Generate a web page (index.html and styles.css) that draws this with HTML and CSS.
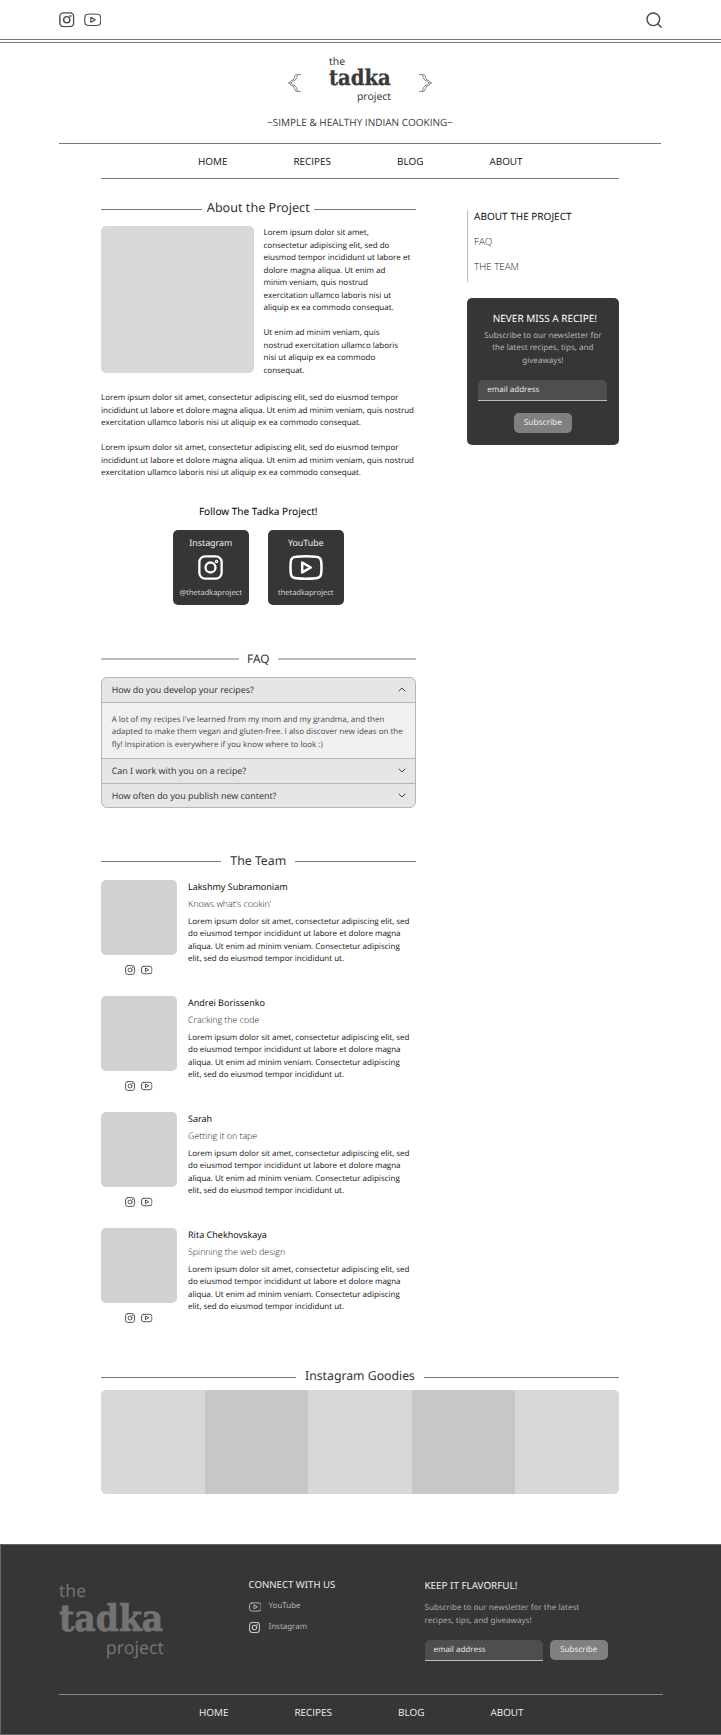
FILE: index.html
```html
<!DOCTYPE html>
<html lang="en">
<head>
<meta charset="utf-8">
<title>The Tadka Project</title>
<link rel="stylesheet" href="styles.css">
</head>
<body>
<svg class="defs" width="0" height="0">
  <symbol id="ig" viewBox="0 0 24 24">
    <rect x="1.3" y="1.3" width="21.4" height="21.4" rx="5.6"/>
    <circle cx="12" cy="12" r="4.8"/>
    <circle class="dot" cx="17.8" cy="6.2" r=".6"/>
  </symbol>
  <symbol id="yt" viewBox="0 0 34 25">
    <path d="M7 1.8Q17 .8 27 1.8Q31.8 2.1 32.2 6.6Q32.8 12.5 32.2 18.4Q31.8 22.9 27 23.2Q17 24.2 7 23.2Q2.2 22.9 1.8 18.4Q1.2 12.5 1.8 6.6Q2.2 2.1 7 1.8Z"/>
    <path d="M13.2 7.6V17.4L21.8 12.5Z"/>
  </symbol>
  <symbol id="orn" viewBox="0 0 13 18">
    <path d="M12.7 .6C10 .2 7 .8 6.7 2.5C7.1 3.6 5.8 4.1 5.6 5.1C5.6 6.5 3.7 6 3 6.6C2.7 7.8 1.8 8.5 .5 9C1.8 9.5 2.7 10.2 3 11.4C3.7 12 5.6 11.5 5.6 12.9C5.8 13.9 7.1 14.4 6.7 15.5C7 17.2 10 17.8 12.7 17.4"/>
    <path d="M10 .8C8.8 1.8 9.5 2 9 3.4C8.4 3.5 8.5 5 7.3 5.6C7.2 7 5.3 6.6 4.7 7.5C4.4 8.3 3.3 8.7 2.6 9C3.3 9.3 4.4 9.7 4.7 10.5C5.3 11.4 7.2 11 7.3 12.4C8.5 13 8.4 14.5 9 14.6C9.5 16 8.8 16.2 10 17.2"/>
  </symbol>
</svg>

<div class="top">
  <svg class="ic ig-top"><use href="#ig"/></svg>
  <svg class="ic yt-top"><use href="#yt"/></svg>
  <svg class="ic search" viewBox="0 0 16 16"><circle cx="7.3" cy="7.3" r="6.3"/><path d="M11.8 11.8L15.2 15.2"/></svg>
</div>
<div class="double"></div>

<header class="brand">
  <div class="brand-row">
    <svg class="orn"><use href="#orn"/></svg>
    <div class="logo"><span class="the">the</span><b>tadka</b><span class="project">project</span></div>
    <svg class="orn flip"><use href="#orn"/></svg>
  </div>
  <div class="tagline">~SIMPLE &amp; HEALTHY INDIAN COOKING~</div>
</header>
<nav class="nav"><a>HOME</a><a>RECIPES</a><a>BLOG</a><a>ABOUT</a></nav>

<main class="page">
  <div class="cols">
    <div class="content">
      <section class="about">
        <h2 class="title t-about"><span>About the Project</span></h2>
        <div class="intro">
          <div class="photo"></div>
          <div class="copy">
            <p>Lorem ipsum dolor sit amet,<br>consectetur adipiscing elit, sed do<br>eiusmod tempor incididunt ut labore et<br>dolore magna aliqua. Ut enim ad<br>minim veniam, quis nostrud<br>exercitation ullamco laboris nisi ut<br>aliquip ex ea commodo consequat.</p>
            <p>Ut enim ad minim veniam, quis<br>nostrud exercitation ullamco laboris<br>nisi ut aliquip ex ea commodo<br>consequat.</p>
          </div>
        </div>
        <div class="copy wide">
          <p>Lorem ipsum dolor sit amet, consectetur adipiscing elit, sed do eiusmod tempor<br>incididunt ut labore et dolore magna aliqua. Ut enim ad minim veniam, quis nostrud<br>exercitation ullamco laboris nisi ut aliquip ex ea commodo consequat.</p>
          <p>Lorem ipsum dolor sit amet, consectetur adipiscing elit, sed do eiusmod tempor<br>incididunt ut labore et dolore magna aliqua. Ut enim ad minim veniam, quis nostrud<br>exercitation ullamco laboris nisi ut aliquip ex ea commodo consequat.</p>
        </div>
        <h3 class="follow">Follow The Tadka Project!</h3>
        <div class="socials">
          <div class="social"><strong>Instagram</strong><svg class="ic ig-big"><use href="#ig"/></svg><span>@thetadkaproject</span></div>
          <div class="social"><strong>YouTube</strong><svg class="ic yt-big"><use href="#yt"/></svg><span>thetadkaproject</span></div>
        </div>
      </section>

      <section class="faq">
        <h2 class="title t-faq"><span>FAQ</span></h2>
        <div class="accordion">
          <div class="q">How do you develop your recipes?<svg class="chev up" viewBox="0 0 8 5"><path d="M.7 .7L4 4L7.3 .7"/></svg></div>
          <p class="answer">A lot of my recipes I've learned from my mom and my grandma, and then<br>adapted to make them vegan and gluten-free. I also discover new ideas on the<br>fly! Inspiration is everywhere if you know where to look :)</p>
          <div class="q">Can I work with you on a recipe?<svg class="chev" viewBox="0 0 8 5"><path d="M.7 .7L4 4L7.3 .7"/></svg></div>
          <div class="q">How often do you publish new content?<svg class="chev" viewBox="0 0 8 5"><path d="M.7 .7L4 4L7.3 .7"/></svg></div>
        </div>
      </section>

      <section class="team">
        <h2 class="title t-team"><span>The Team</span></h2>
        <article class="member">
          <div class="face"><div class="avatar"></div><div class="links"><svg class="ic ig-s"><use href="#ig"/></svg><svg class="ic yt-s"><use href="#yt"/></svg></div></div>
          <div class="bio"><h4>Lakshmy Subramoniam</h4><h5>Knows what’s cookin’</h5><p>Lorem ipsum dolor sit amet, consectetur adipiscing elit, sed<br>do eiusmod tempor incididunt ut labore et dolore magna<br>aliqua. Ut enim ad minim veniam. Consectetur adipiscing<br>elit, sed do eiusmod tempor incididunt ut.</p></div>
        </article>
        <article class="member">
          <div class="face"><div class="avatar"></div><div class="links"><svg class="ic ig-s"><use href="#ig"/></svg><svg class="ic yt-s"><use href="#yt"/></svg></div></div>
          <div class="bio"><h4>Andrei Borissenko</h4><h5>Cracking the code</h5><p>Lorem ipsum dolor sit amet, consectetur adipiscing elit, sed<br>do eiusmod tempor incididunt ut labore et dolore magna<br>aliqua. Ut enim ad minim veniam. Consectetur adipiscing<br>elit, sed do eiusmod tempor incididunt ut.</p></div>
        </article>
        <article class="member">
          <div class="face"><div class="avatar"></div><div class="links"><svg class="ic ig-s"><use href="#ig"/></svg><svg class="ic yt-s"><use href="#yt"/></svg></div></div>
          <div class="bio"><h4>Sarah</h4><h5>Getting it on tape</h5><p>Lorem ipsum dolor sit amet, consectetur adipiscing elit, sed<br>do eiusmod tempor incididunt ut labore et dolore magna<br>aliqua. Ut enim ad minim veniam. Consectetur adipiscing<br>elit, sed do eiusmod tempor incididunt ut.</p></div>
        </article>
        <article class="member">
          <div class="face"><div class="avatar"></div><div class="links"><svg class="ic ig-s"><use href="#ig"/></svg><svg class="ic yt-s"><use href="#yt"/></svg></div></div>
          <div class="bio"><h4>Rita Chekhovskaya</h4><h5>Spinning the web design</h5><p>Lorem ipsum dolor sit amet, consectetur adipiscing elit, sed<br>do eiusmod tempor incididunt ut labore et dolore magna<br>aliqua. Ut enim ad minim veniam. Consectetur adipiscing<br>elit, sed do eiusmod tempor incididunt ut.</p></div>
        </article>
      </section>
    </div>

    <aside class="side">
      <div class="toc"><a class="current">ABOUT THE PROJECT</a><a>FAQ</a><a>THE TEAM</a></div>
      <div class="news">
        <h3>NEVER MISS A RECIPE!</h3>
        <p>Subscribe to our newsletter for<br>the latest recipes, tips, and<br>giveaways!</p>
        <div class="input">email address</div>
        <div class="btn">Subscribe</div>
      </div>
    </aside>
  </div>

  <section class="goodies">
    <h2 class="title t-good"><span>Instagram Goodies</span></h2>
    <div class="strip"><i></i><i></i><i></i><i></i><i></i></div>
  </section>
</main>

<footer class="footer">
  <div class="foot-main">
    <div class="logo large"><span class="the">the</span><b>tadka</b><span class="project">project</span></div>
    <div class="connect">
      <h3>CONNECT WITH US</h3>
      <a><svg class="ic yt-f"><use href="#yt"/></svg>YouTube</a>
      <a><svg class="ic ig-f"><use href="#ig"/></svg>Instagram</a>
    </div>
    <div class="keep">
      <h3>KEEP IT FLAVORFUL!</h3>
      <p>Subscribe to our newsletter for the latest<br>recipes, tips, and giveaways!</p>
      <div class="form"><div class="input">email address</div><div class="btn">Subscribe</div></div>
    </div>
  </div>
  <nav class="foot-nav"><a>HOME</a><a>RECIPES</a><a>BLOG</a><a>ABOUT</a></nav>
</footer>
</body>
</html>
```
FILE: styles.css
```css
* { box-sizing: border-box; margin: 0; padding: 0; }
body { width: 721px; background: #fff; color: #111; font: 8px/12.5px "Open Sans", sans-serif; white-space: nowrap; text-rendering: geometricPrecision; }
.defs { display: block; position: absolute; }
h2, h3, h4, h5 { font-family: "Noto Sans", sans-serif; font-weight: 400; }
.ic { display: block; flex: none; fill: none; stroke: #4a4a4a; stroke-width: 2.2; stroke-linejoin: round; stroke-linecap: round; }
.ic .dot { fill: #4a4a4a; stroke: none; }

.top { height: 39px; padding: 12px 59px 0; display: flex; }
.ig-top { width: 15.5px; height: 15.5px; margin-right: 9px; }
.yt-top { width: 17.5px; height: 15.5px; }
.search { width: 16px; height: 16px; margin-left: auto; stroke-width: 1.4; }
.double { height: 4px; border: solid #777; border-width: 1px 0; }

.brand { height: 101px; margin: 0 60px 0 59px; padding-top: 14px; border-bottom: 1px solid #777; color: #3a3a3a; }
.brand-row { display: flex; justify-content: center; }
.orn { width: 13px; height: 18px; margin: 17px 28px 0; fill: none; stroke: #444; stroke-width: .7; }
.flip { transform: scaleX(-1); }
.logo { display: flex; flex-direction: column; width: 62px; }
.logo span { font: 10.4px/10px "Noto Sans", sans-serif; }
.logo b { font: 700 21.8px/23px "DejaVu Serif Condensed", "DejaVu Serif", serif; font-stretch: condensed; -webkit-text-stroke: .3px currentColor; }
.logo .project { align-self: flex-end; line-height: 15.6px; }
.tagline { margin-top: 9.9px; text-align: center; font-size: 10px; line-height: 14px; }

.nav, .foot-nav { display: flex; justify-content: center; gap: 66px; font-size: 9.92px; line-height: 35px; }
.nav { height: 35px; margin: 0 102px 0 101px; border-bottom: 1px solid #777; }
.nav a, .foot-nav a { position: relative; left: .3px; }

.page { padding: 0 102px 0 101px; }
.cols { display: flex; justify-content: space-between; }
.content { width: 314.5px; }
.title { display: flex; align-items: center; gap: 9px; font-size: 12.3px; line-height: 18px; color: #333; }
.title::before, .title::after { content: ""; flex: 1; height: 1px; background: #777; }
.t-about { font-size: 12.6px; margin-top: 19.5px; gap: 4.5px; }
.t-about::before, .t-about::after { position: relative; top: 1.5px; }
.t-good::before, .t-good::after { position: relative; top: 1px; }
.intro { display: flex; gap: 10px; margin-top: 9.5px; height: 147px; }
.photo { width: 152.5px; height: 147px; border-radius: 5px; background: #d8d8d8; }
.copy p + p { margin-top: 12.5px; }
.intro .copy { padding-top: 1px; }
.wide { padding-top: 19px; }
.follow { margin-top: 24.7px; text-align: center; font-size: 10.05px; line-height: 14px; color: #000; }
.socials { display: flex; justify-content: center; gap: 19.5px; margin-top: 11.8px; }
.social { display: flex; flex-direction: column; align-items: center; width: 75.5px; height: 75.5px; padding-top: 5px; border-radius: 5px; background: #363636; color: #f2f2f2; }
.social strong { font: 8.85px/16px "Noto Sans", sans-serif; }
.social span { margin-top: 5.7px; font-size: 7.5px; line-height: 14px; color: #ddd; }
.social .ic { stroke: #fff; margin-top: 4.5px; }
.social .dot { fill: #fff; }
.ig-big { width: 25px; height: 25px; }
.yt-big { width: 34px; height: 25px; stroke-width: 2.5; }

.faq { padding-top: 44.5px; }
.t-faq { gap: 8.5px; font-size: 11.8px; }
.t-faq::before, .t-faq::after { height: 2px; background: #bbb; }
.accordion { margin-top: 9px; height: 131px; border: 1px solid #b5b5b5; border-radius: 6px; background: #e6e6e6; overflow: hidden; color: #383838; }
.q { display: flex; justify-content: space-between; align-items: center; height: 24px; padding: 0 9px 0 9.7px; font: 8.9px/24px "Noto Sans", sans-serif; }
.q + .q { border-top: 1px solid #b5b5b5; height: 25px; }
.chev { width: 8px; height: 5px; fill: none; stroke: #444; stroke-width: 1; }
.up { transform: scaleY(-1); }
.answer { height: 57px; padding: 11px 9.7px 0; border: solid #b5b5b5; border-width: 1px 0; background: #f0f0f0; color: #484848; }

.team { padding-top: 44.5px; }
.member { display: flex; gap: 11.5px; height: 116px; }
.t-team { margin-bottom: 10px; }
.avatar { width: 75.5px; height: 75px; border-radius: 5px; background: #d1d1d1; }
.links { display: flex; justify-content: center; align-items: center; gap: 6px; margin-top: 10px; }
.ig-s { width: 10px; height: 10px; }
.yt-s { width: 11.5px; height: 10px; stroke-width: 2.8; }
.bio h4 { font-size: 9px; line-height: 13px; }
.bio h5 { margin: 4px 0; font: 300 8.9px/13px "Open Sans", sans-serif; color: #222; }
.bio p { padding-top: 1.4px; }

.side { width: 152.3px; padding-top: 31px; }
.toc { display: flex; flex-direction: column; height: 72px; margin-bottom: 16px; padding-left: 6.3px; border-left: 1px solid #bbb; font-weight: 300; font-size: 9.8px; line-height: 25px; color: #222; }
.toc .current { margin-top: -6px; font: 10px/25px "Noto Sans", sans-serif; color: #111; }
.news { height: 147px; padding: 12px 11.5px 0; border-radius: 5px; background: #363636; color: #b5b5b5; text-align: center; display: flex; flex-direction: column; align-items: center; }
.news h3 { margin-left: 4px; font-size: 10px; line-height: 16px; color: #fff; }
.news p, .keep p { font: 8.07px/12.5px "Noto Sans", sans-serif; }
.news p { margin-top: 3.7px; }
.input { height: 21px; padding-left: 9px; border-radius: 5px 5px 0 0; border-bottom: 1px solid #bbb; background: #4e4e4e; color: #eee; font: 8px/20px "Open Sans", sans-serif; text-align: left; }
.news .input { width: 129px; margin-top: 12.8px; }
.btn { width: 58.5px; height: 20px; border-radius: 5px; background: #808080; color: #eee; text-align: center; font: 8.3px/20px "Noto Sans", sans-serif; }
.news .btn { margin-top: 12px; }

.goodies { padding-top: 23px; }
.t-good { font-size: 12.25px; margin-bottom: 4.7px; }
.strip { display: flex; height: 103.5px; border-radius: 5px; overflow: hidden; background: #d8d8d8; }
.strip i { flex: 1; }
.strip i:nth-child(even) { background: #c7c7c7; }

.footer { height: 191px; margin-top: 50px; padding: 0 58px; border: 1px solid #666; border-width: 1px 0 1px 1px; background: #363636; color: #eee; }
.foot-main { display: flex; height: 150px; border-bottom: 1px solid #888; }
.large { width: 105px; padding-top: 37.5px; color: #737373; }
.large span { font-size: 17.5px; line-height: 18px; }
.large b { font-size: 36.8px; line-height: 37px; -webkit-text-stroke: .7px currentColor; }
.large .project { line-height: 22px; font-size: 17.8px; }
.footer h3 { font-size: 9.65px; line-height: 16px; }
.connect { margin-left: 84.5px; width: 176px; padding-top: 32.5px; }
.connect a { display: flex; align-items: center; position: relative; height: 21px; padding-left: 20px; font: 7.95px/21px "Noto Sans", sans-serif; color: #b5b5b5; }
.connect h3 { margin-bottom: 3px; }
.connect .ic { position: absolute; left: 0; stroke: #ccc; }
.connect .dot { fill: #ccc; }
.yt-f { width: 12.7px; height: 10px; }
.ig-f { width: 11px; height: 11px; }
.keep { padding-top: 32px; }
.keep h3 { font-size: 9.86px; }
.keep p { margin-top: 9.8px; color: #a8a8a8; }
.form { display: flex; gap: 7.5px; margin-top: 12.5px; }
.form .input { width: 118px; }
.form .btn { width: 57.5px; height: 20.5px; font-size: 8.1px; }
.foot-nav { line-height: 35px; }
```
